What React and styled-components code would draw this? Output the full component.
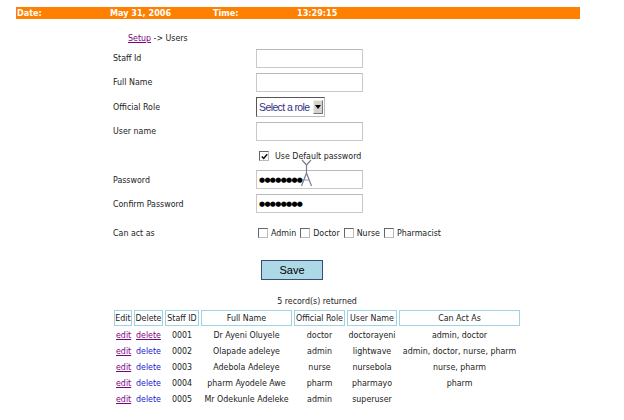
import styled, { createGlobalStyle } from "styled-components"

const GlobalStyle = createGlobalStyle`
  body {
    margin: 0;
    background: #fff;
    font-family: "DejaVu Sans Condensed", "DejaVu Sans", "Liberation Sans", sans-serif;
    font-size: 8.8px;
    color: #222;
  }
`

const users = [
  { id: "0001", name: "Dr Ayeni Oluyele", role: "doctor", user: "doctorayeni", acts: "admin, doctor", visited: true },
  { id: "0002", name: "Olapade adeleye", role: "admin", user: "lightwave", acts: "admin, doctor, nurse, pharm" },
  { id: "0003", name: "Adebola Adeleye", role: "nurse", user: "nursebola", acts: "nurse, pharm" },
  { id: "0004", name: "pharm Ayodele Awe", role: "pharm", user: "pharmayo", acts: "pharm" },
  { id: "0005", name: "Mr Odekunle Adeleke", role: "admin", user: "superuser", acts: "" },
]

const dots = "\u25CF".repeat(8)

const CheckMark = () => (
  <svg width="7" height="7" viewBox="0 0 7 7">
    <path d="M0.8 3.4 L2.7 5.4 L6.2 1.2" fill="none" stroke="#111" strokeWidth="1.5" />
  </svg>
)

const App = () => {
  return (
    <Page>
      <GlobalStyle />
      <TopBar>
        <span>Date:</span>
        <span>May 31, 2006</span>
        <span>Time:</span>
        <span>13:29:15</span>
      </TopBar>

      <Crumb>
        <Link $visited>Setup</Link> -&gt; Users
      </Crumb>

      <Form>
        <Label>Staff Id</Label>
        <Field><Input /></Field>
        <Label>Full Name</Label>
        <Field><Input /></Field>
        <Label>Official Role</Label>
        <Field>
          <Select>
            <span>Select a role</span>
            <SelectArrow />
          </Select>
        </Field>
        <Label>User name</Label>
        <Field><Input /></Field>
        <Label />
        <Field>
          <CheckLine>
            <Box $checked><CheckMark /></Box>
            Use Default password
          </CheckLine>
        </Field>
        <Label>Password</Label>
        <Field><Input $secret value={dots} readOnly /></Field>
        <Label>Confirm Password</Label>
        <Field><Input $secret value={dots} readOnly /></Field>
        <Label $gap>Can act as</Label>
        <Field $gap>
          <Options>
            {["Admin", "Doctor", "Nurse", "Pharmacist"].map(o => (
              <Option key={o}><Box />{o}</Option>
            ))}
          </Options>
        </Field>
        <Cursor width="16" height="30" viewBox="0 0 16 30">
          <path d="M3 2 L7.5 7 L12 2 M7.5 7 L7.5 15 M2.5 28 L7.5 15 L12.5 28" fill="none" stroke="#7c7c94" strokeWidth="1.2" />
          <path d="M5 22 L10 22" stroke="#7c7c94" strokeWidth="0.8" />
        </Cursor>
      </Form>

      <SaveRow>
        <SaveButton>Save</SaveButton>
      </SaveRow>

      <Count>5 record(s) returned</Count>

      <Table>
        <colgroup>
          <col style={{ width: 18 }} />
          <col style={{ width: 29 }} />
          <col style={{ width: 34 }} />
          <col style={{ width: 91 }} />
          <col style={{ width: 51 }} />
          <col style={{ width: 50 }} />
          <col style={{ width: 121 }} />
        </colgroup>
        <thead>
          <tr>
            {["Edit", "Delete", "Staff ID", "Full Name", "Official Role", "User Name", "Can Act As"].map(h => (
              <Th key={h}>{h}</Th>
            ))}
          </tr>
        </thead>
        <tbody>
          {users.map(u => (
            <tr key={u.id}>
              <Td $left><Link $visited>edit</Link></Td>
              <Td $left><Link $visited={u.visited}>delete</Link></Td>
              <Td>{u.id}</Td>
              <Td>{u.name}</Td>
              <Td>{u.role}</Td>
              <Td>{u.user}</Td>
              <Td>{u.acts}</Td>
            </tr>
          ))}
        </tbody>
      </Table>
    </Page>
  )
}

const Page = styled.div`
  width: 624px;
  height: 420px;
  padding-top: 7px;
  box-sizing: border-box;
  overflow: hidden;
`

const TopBar = styled.div`
  margin-left: 16px;
  width: 564px;
  height: 12px;
  background: #ff8000;
  color: #fff;
  font-weight: bold;
  font-size: 9px;
  line-height: 12px;
  display: grid;
  grid-template-columns: 93px 103px 84px 1fr;
  padding-left: 1px;
  box-sizing: border-box;
`

const Crumb = styled.div`
  margin: 13px 0 0 128px;
  height: 12px;
  line-height: 12px;
`

const Link = styled.a`
  color: ${props => props.$visited ? "#800080" : "#2020d0"};
  text-decoration: ${props => props.$visited ? "underline" : "none"};
  cursor: pointer;
`

const Form = styled.div`
  position: relative;
  margin: 2px 0 0 113px;
  display: grid;
  grid-template-columns: 143px 120px;
  grid-auto-rows: 24.3px;
`

const Label = styled.div`
  display: flex;
  align-items: center;
  margin-top: ${props => props.$gap ? "9px" : "0"};
`

const Field = styled.div`
  display: flex;
  align-items: center;
  margin-top: ${props => props.$gap ? "9px" : "0"};
`

const Input = styled.input`
  width: 107px;
  height: 19px;
  box-sizing: border-box;
  border: 1px solid #c9c9c9;
  border-top-color: #b9b9b9;
  padding: 0 0 0 2px;
  margin: 0;
  font-family: "DejaVu Sans", sans-serif;
  font-size: 7px;
  letter-spacing: ${props => props.$secret ? "-0.7px" : "0"};
  color: #000;
  outline: none;
`

const Select = styled.div`
  width: 69px;
  height: 20px;
  box-sizing: border-box;
  border: 1px solid #555;
  border-right-color: #bbb;
  border-bottom-color: #bbb;
  display: flex;
  align-items: center;
  justify-content: space-between;
  padding: 0 1px 0 2px;
  font-family: "Liberation Sans", sans-serif;
  font-size: 10.5px;
  letter-spacing: -0.6px;
  white-space: nowrap;
  color: #33337f;
`

const SelectArrow = styled.div`
  flex: none;
  width: 10px;
  height: 14px;
  background: #d6d3ce;
  border: 1px solid #eee;
  border-right-color: #777;
  border-bottom-color: #777;
  box-sizing: border-box;
  position: relative;
  &::after {
    content: "";
    position: absolute;
    left: 1px;
    top: 4px;
    border-left: 3px solid transparent;
    border-right: 3px solid transparent;
    border-top: 4px solid #000;
  }
`

const CheckLine = styled.div`
  display: flex;
  align-items: center;
  gap: 6px;
  margin: 2px 0 0 3px;
`

const Box = styled.span`
  width: 10px;
  height: 10px;
  box-sizing: border-box;
  border: 1px solid #666;
  border-right-color: #bbb;
  border-bottom-color: #bbb;
  background: #fff;
  display: inline-flex;
  align-items: center;
  justify-content: center;
`

const Options = styled.div`
  display: flex;
  align-items: center;
  gap: 4px;
  margin-left: 2px;
  white-space: nowrap;
`

const Option = styled.span`
  display: inline-flex;
  align-items: center;
  gap: 3px;
`

const Cursor = styled.svg`
  position: absolute;
  left: 186px;
  top: 112px;
`

const SaveRow = styled.div`
  margin: 20px 0 0 261px;
`

const SaveButton = styled.button`
  width: 62px;
  height: 20px;
  background: #add8e6;
  border: 1px solid #3a4a7a;
  font-family: "Liberation Sans", sans-serif;
  font-size: 11px;
  color: #000;
  padding: 0;
`

const Count = styled.div`
  margin: 15px 0 0 113px;
  width: 408px;
  text-align: center;
  line-height: 12px;
`

const Table = styled.table`
  margin: 1px 0 0 112px;
  border-collapse: separate;
  border-spacing: 2px 2px;
  table-layout: fixed;
`

const Th = styled.th`
  font-weight: normal;
  border: 1px solid #9fd3e3;
  height: 16px;
  padding: 0;
  box-sizing: border-box;
  white-space: nowrap;
  overflow: hidden;
  text-align: center;
`

const Td = styled.td`
  height: 14px;
  padding: 0 0 0 ${props => props.$left ? "2px" : "0"};
  text-align: ${props => props.$left ? "left" : "center"};
  white-space: nowrap;
`

export default App
